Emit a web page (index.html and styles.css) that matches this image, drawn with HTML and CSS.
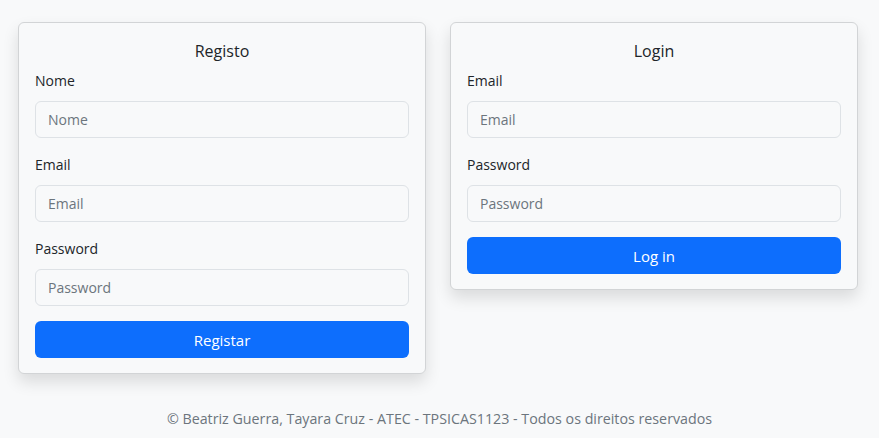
FILE: index.html
```html
<!DOCTYPE html>
<html lang="pt">
<head>
<meta charset="utf-8">
<title>Registo / Login</title>
<link rel="stylesheet" href="styles.css">
</head>
<body>
<main class="panels">
  <section class="card">
    <h2 class="card-title">Registo</h2>
    <div class="field">
      <label class="form-label">Nome</label>
      <input class="form-control" type="text" placeholder="Nome">
    </div>
    <div class="field">
      <label class="form-label">Email</label>
      <input class="form-control" type="email" placeholder="Email">
    </div>
    <div class="field">
      <label class="form-label">Password</label>
      <input class="form-control" type="password" placeholder="Password">
    </div>
    <button class="btn">Registar</button>
  </section>
  <section class="card">
    <h2 class="card-title">Login</h2>
    <div class="field">
      <label class="form-label">Email</label>
      <input class="form-control" type="email" placeholder="Email">
    </div>
    <div class="field">
      <label class="form-label">Password</label>
      <input class="form-control" type="password" placeholder="Password">
    </div>
    <button class="btn">Log in</button>
  </section>
</main>
<footer class="footer">© Beatriz Guerra, Tayara Cruz - ATEC - TPSICAS1123 - Todos os direitos reservados</footer>
</body>
</html>
```

FILE: styles.css
```css
* { box-sizing: border-box; }
html, body { height: 100%; }
body {
  margin: 0;
  background: #f8f9fa;
  color: #212529;
  font-family: "Open Sans", "Noto Sans", sans-serif;
  font-size: 14px;
  line-height: 24px;
}
.panels {
  display: grid;
  grid-template-columns: 1fr 1fr;
  gap: 24px;
  align-items: start;
  padding: 22px 21px 0 18px;
}
.card {
  background: #f8f9fa;
  border: 1px solid #d2d4d6;
  border-radius: 6px;
  box-shadow: 0 8px 16px rgba(0,0,0,.12);
  padding: 16px 16px 15px;
}
.card-title {
  margin: 0 0 6px;
  text-align: center;
  font-size: 16px;
  font-weight: 400;
  line-height: 24px;
}
.field { margin-bottom: 15px; }
.form-label {
  display: block;
  margin-bottom: 8px;
}
.form-control {
  display: block;
  width: 100%;
  height: 37px;
  padding: 6px 12px;
  font: inherit;
  font-size: 14px;
  color: #212529;
  background: #f8f9fa;
  border: 1px solid #dee2e6;
  border-radius: 6px;
}
.form-control::placeholder { color: #6c757d; }
.btn {
  display: block;
  width: 100%;
  height: 37px;
  font: inherit;
  font-size: 15px;
  color: #fff;
  background: #0d6efd;
  border: 0;
  border-radius: 6px;
}
.footer {
  text-align: center;
  color: #6c757d;
  font-size: 14.25px;
  padding-top: 33px;
}
```
